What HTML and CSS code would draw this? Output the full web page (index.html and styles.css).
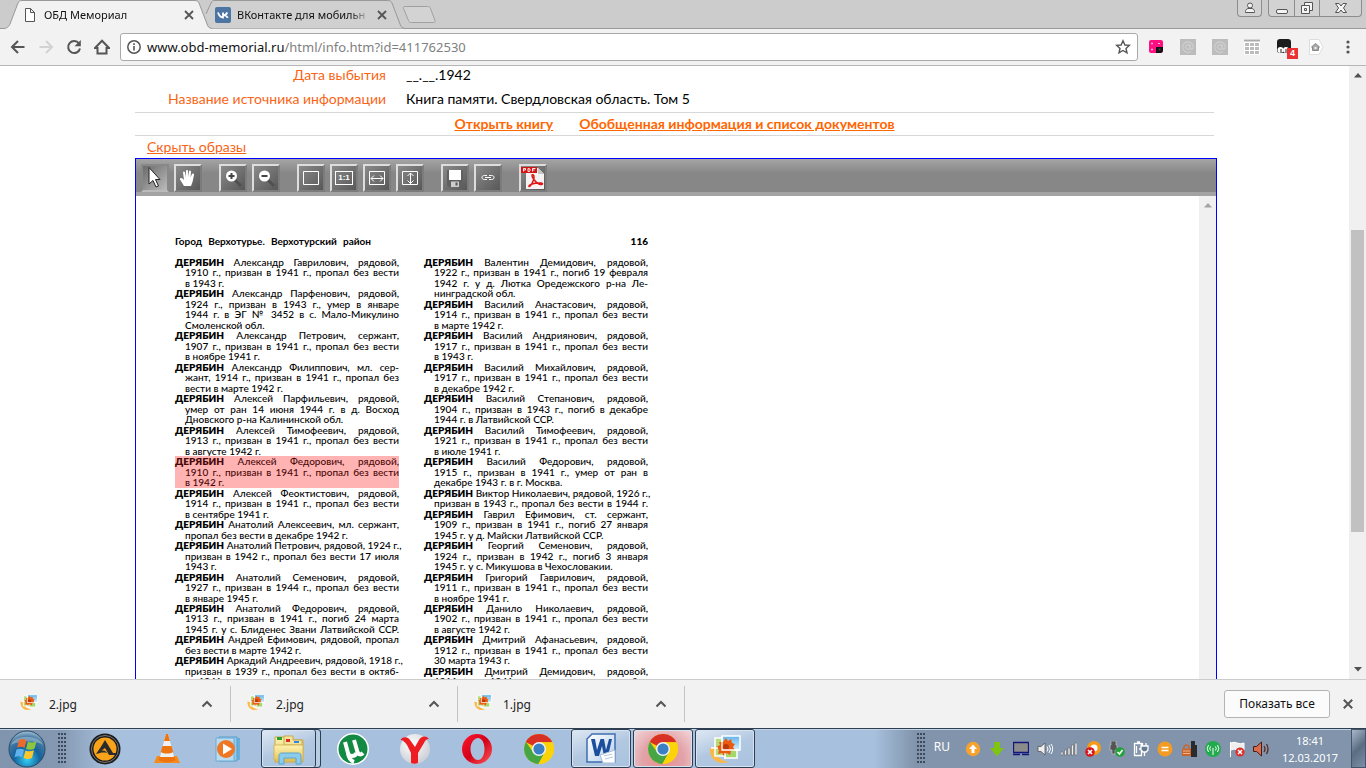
FILE: index.html
```html
<!DOCTYPE html>
<html lang="ru">
<head>
<meta charset="utf-8">
<title>ОБД Мемориал</title>
<link rel="stylesheet" href="styles.css">
</head>
<body>
<svg class="defs" width="0" height="0" aria-hidden="true">
  <defs>
    <linearGradient id="sky" x1="0" y1="0" x2="0" y2="1"><stop offset="0" stop-color="#5fb4ee"/><stop offset="1" stop-color="#d6effc"/></linearGradient>
    <radialGradient id="orb" cx=".5" cy=".8" r=".8"><stop offset="0" stop-color="#35d0f5"/><stop offset=".45" stop-color="#14629c"/><stop offset=".8" stop-color="#4a7ca4"/><stop offset="1" stop-color="#a5c3d8"/></radialGradient>
    <linearGradient id="opera" x1="0" y1="0" x2="1" y2="1"><stop offset="0" stop-color="#ff1b2d"/><stop offset=".5" stop-color="#d4001a"/><stop offset="1" stop-color="#ff5a5a"/></linearGradient>
    <radialGradient id="pearl" cx=".4" cy=".35" r=".7"><stop offset="0" stop-color="#fff"/><stop offset="1" stop-color="#c9ccd2"/></radialGradient>
    <linearGradient id="folder" x1="0" y1="0" x2="0" y2="1"><stop offset="0" stop-color="#fdf3b0"/><stop offset="1" stop-color="#e5c65f"/></linearGradient>
    <linearGradient id="word" x1="0" y1="0" x2="1" y2="1"><stop offset="0" stop-color="#fff"/><stop offset="1" stop-color="#b5cdec"/></linearGradient>
    <symbol id="photo" viewBox="0 0 32 32">
      <path d="M1 15C0 25 8 33 20 29C12 28 7 24 6 15Z" fill="#fbb848"/>
      <path d="M6 5h15v18H6z" fill="#b6dc7a" stroke="#fff" stroke-width="1.500"/>
      <path d="M13 3h18v14H13z" fill="url(#sky)" stroke="#fff" stroke-width="1.500"/>
      <path d="M16 17h12v8H16z" fill="#a5d76a" stroke="#fff" stroke-width="1.500"/>
      <path d="M17 5l2 3l3-2l1 4l3 1l-2 3l2 3l-4 1l-1 4l-3-2l-3 3l-2-3l-4 1l1-4l-3-3l4-2l-1-3l4 0z" fill="#ec5a10"/>
      <circle cx="17" cy="14" r="3" fill="#b93a08"/>
      <path d="M13 3v14h18M16 20v6M2 15h7" fill="none" stroke="#fff" stroke-width="1.300"/>
    </symbol>
    <symbol id="chrome" viewBox="0 0 30 30">
      <circle cx="15" cy="15" r="14" fill="#fcd209"/>
      <path d="M15 15L2.600 8.400A14 14 0 0 1 27.600 8.700H15Z" fill="#d93025"/>
      <path d="M15 15L20.500 18L14.500 29A14 14 0 0 1 2.700 8.300L9.500 18Z" fill="#46a544"/>
      <path d="M15 8.700H27.600A14 14 0 0 1 14.500 29L20.600 18Z" fill="#fcd209"/>
      <circle cx="15" cy="15" r="6.600" fill="#eef3f8"/><circle cx="15" cy="15" r="5.200" fill="#3b7fc4"/>
    </symbol>
  </defs>
</svg>

<header class="tabstrip">
  <div class="tabs" role="tablist">
    <div class="tab active" role="tab" aria-selected="true">
      <svg class="tab-shape" viewBox="0 0 208 29" preserveAspectRatio="none"><path d="M0 28.5C4 28 5 26 6 24L14 3C15 1 16 .5 18 .5H190C193 .5 194 1 195 3L203 24C204 27 205 28 208 28.5V29H0Z" fill="#f2f2f2"/><path d="M0 28.5C4 28 5 26 6 24L14 3C15 1 16 .5 18 .5H190C193 .5 194 1 195 3L203 24C204 27 205 28 208 28.5" fill="none" stroke="#999"/></svg>
      <svg class="favicon" viewBox="0 0 16 16"><path d="M3.500 1.500h5l4 4v9h-9zM8.500 1.500v4h4" fill="#fff" stroke="#555"/></svg>
      <span class="tab-title">ОБД Мемориал</span>
      <button class="tab-close" type="button" aria-label="Закрыть вкладку"><svg viewBox="0 0 10 10"><path d="M1 1L9 9M9 1L1 9" stroke="#555" stroke-width="1.800"/></svg></button>
    </div>
    <div class="tab" role="tab" aria-selected="false">
      <svg class="tab-shape" viewBox="0 0 208 29" preserveAspectRatio="none"><path d="M8 14L14 3C15 1 16 .5 18 .5H190C193 .5 194 1 195 3L203 24C204 27 205 28 208 28.5H15Z" fill="#d0d0d0"/><path d="M9 14L14 3C15 1 16 .5 18 .5H190C193 .5 194 1 195 3L203 24C204 27 205 28 208 28.5" fill="none" stroke="#999"/></svg>
      <svg class="favicon" viewBox="0 0 16 16"><rect width="16" height="16" rx="2" fill="#4d75a3"/><path d="M3 5.500C4 8.500 5.500 10.500 8 10.500V5.500M8 8.500C10 8.500 11.500 7 12.300 5.500M8.700 8.200C10.500 8.300 12 9.500 12.800 10.800" fill="none" stroke="#fff" stroke-width="1.800"/></svg>
      <span class="tab-title">ВКонтакте для мобильн</span>
      <button class="tab-close" type="button" aria-label="Закрыть вкладку"><svg viewBox="0 0 10 10"><path d="M1 1L9 9M9 1L1 9" stroke="#555" stroke-width="1.800"/></svg></button>
    </div>
    <button class="new-tab" type="button" aria-label="Новая вкладка"><svg viewBox="0 0 34 18"><path d="M3 .5H25.500C27 .5 28 1 28.500 2.500L33 14.500C33.500 16 33 16.500 31.500 16.500H9.500C8 16.500 7 16 6.500 14.500L1.500 2.500C1 1.200 1.500.5 3 .5Z" fill="#d3d3d3" stroke="#a0a0a0"/></svg></button>
  </div>
  <div class="window-controls">
    <button class="user" type="button" aria-label="Пользователь"><svg viewBox="0 0 12 12"><circle cx="6" cy="3.500" r="2.500"/><path d="M1.500 10.500V9.500C1.500 7.500 3 7 4 6.500H8C9 7 10.500 7.500 10.500 9.500V10.500Z"/></svg></button>
    <div class="window-group">
      <button type="button" aria-label="Свернуть"><svg viewBox="0 0 14 14"><rect x="1.500" y="8.500" width="11" height="4" rx="1.500"/></svg></button>
      <button type="button" aria-label="Восстановить"><svg viewBox="0 0 14 14"><path d="M4.500 1.500h8v8h-8z"/><path d="M1.500 4.500h8v8h-8z"/><path d="M4.500 7.500h2v2h-2z"/></svg></button>
      <button class="wide" type="button" aria-label="Закрыть"><svg viewBox="0 0 14 14"><path d="M1.500 2.500h3.500L7 5L9 2.500h3.500L9.500 7L12.500 11.500H9L7 9L5 11.500H1.500L4.500 7Z"/></svg></button>
    </div>
  </div>
</header>

<nav class="toolbar">
  <button type="button" aria-label="Назад"><svg viewBox="0 0 16 16"><path d="M14.500 8H2.500M8 2L2 8L8 14" stroke="#555"/></svg></button>
  <button type="button" aria-label="Вперёд"><svg viewBox="0 0 16 16"><path d="M1.500 8H13.500M8 2L14 8L8 14" stroke="#d2d2d2"/></svg></button>
  <button type="button" aria-label="Обновить"><svg viewBox="0 0 16 16"><path d="M13 4.500A6 6 0 1 0 14 9.500" stroke="#555"/><path d="M14.800 1V7.300H8.500Z" fill="#555" stroke="none"/></svg></button>
  <button type="button" aria-label="Домой"><svg viewBox="0 0 16 16"><path d="M1 9L8 1.800L15 9H12.500V14.500H3.500V9Z" stroke="#555"/></svg></button>
  <div class="address">
    <svg class="info-icon" viewBox="0 0 16 16"><circle cx="8" cy="8" r="6.200" fill="none" stroke="#555" stroke-width="1.500"/><path d="M8 7v4.500M8 4.300v1.600" stroke="#555" stroke-width="1.600"/></svg>
    <label class="host" for="url">www.obd-memorial.ru</label>
    <input id="url" type="text" value="/html/info.htm?id=411762530">
    <button type="button" aria-label="В закладки"><svg viewBox="0 0 16 16"><path d="M8 1.800L9.900 6L14.300 6.400L11 9.400L12 13.900L8 11.500L4 13.900L5 9.400L1.700 6.400L6.100 6Z" stroke="#555" stroke-width="1.400"/></svg></button>
  </div>
  <div class="extensions">
    <button type="button" aria-label="Расширение"><svg viewBox="0 0 16 16"><rect x="1" y="1" width="14" height="13" rx="2" fill="#ff0f80"/><path d="M8 8h7v4l-2 2H8z" fill="#111"/><path d="M3 4.500h2M4 3.500v2M10 4.500h2M3 10.500h2M4 9.500v2" stroke="#ffb6da" stroke-width="1"/><rect x="10.500" y="9.500" width="2" height="2" fill="#444"/></svg></button>
    <button type="button" aria-label="Почта"><svg viewBox="0 0 16 16"><rect width="16" height="16" fill="#bcbcbc"/><circle cx="8" cy="8" r="2.300" stroke="#cfcfcf" stroke-width="1.200"/><path d="M10.300 5.500V9C10.300 10.800 13.300 10.500 13.300 8A5.300 5.300 0 1 0 11 12.500" stroke="#cfcfcf" stroke-width="1.200"/></svg></button>
    <button type="button" aria-label="Почта"><svg viewBox="0 0 16 16"><rect width="16" height="16" fill="#bcbcbc"/><circle cx="8" cy="8" r="2.300" stroke="#cfcfcf" stroke-width="1.200"/><path d="M10.300 5.500V9C10.300 10.800 13.300 10.500 13.300 8A5.300 5.300 0 1 0 11 12.500" stroke="#cfcfcf" stroke-width="1.200"/></svg></button>
    <button type="button" aria-label="Таблица"><svg viewBox="0 0 16 16"><rect width="16" height="16" fill="#fff"/><path d="M0 1.500h16" stroke="#aaa" stroke-width="2"/><path d="M1 5.500h14M1 9.500h14M1 13.500h14" stroke="#bcbcbc" stroke-width="3" stroke-dasharray="4 1"/></svg></button>
    <button class="badged" type="button" aria-label="Расширение, 4"><svg viewBox="0 0 16 16"><rect x="1" y="0" width="14" height="14" rx="3" fill="#1c1c1c"/><circle cx="4.500" cy="11" r="3" fill="#fff"/><circle cx="10" cy="11" r="3" fill="#fff"/><path d="M5 10v4M10 10v4" stroke="#222" stroke-width="1"/></svg><span class="badge">4</span></button>
    <button type="button" aria-label="Домашняя страница"><svg viewBox="0 0 16 16"><path d="M1.500.5H11L15 8L11 15.500H1.500Z" fill="#fff" stroke="#ddd" stroke-width="1"/><path d="M3.500 8L7.500 4.500L11.500 8H10.500V11.500H4.500V8Z" fill="#aaa" stroke="#888" stroke-width="1"/><path d="M6.500 8h2v2h-2z" fill="#eee"/></svg></button>
  </div>
  <button class="menu" type="button" aria-label="Меню"><svg viewBox="0 0 16 16"><g fill="#555"><circle cx="8" cy="3" r="1.600"/><circle cx="8" cy="8" r="1.600"/><circle cx="8" cy="13" r="1.600"/></g></svg></button>
</nav>

<div class="viewport">
  <main class="page">
    <dl class="facts">
      <dt>Дата выбытия</dt><dd>__.__.1942</dd>
      <dt>Название источника информации</dt><dd>Книга памяти. Свердловская область. Том 5</dd>
    </dl>
    <div class="links">
      <a href="#book">Открыть книгу</a>
      <a href="#summary">Обобщенная информация и список документов</a>
    </div>
    <div class="toggle"><a href="#viewer">Скрыть образы</a></div>

    <section class="viewer" id="viewer">
      <div class="viewer-bar">
        <div class="group">
          <button class="pressed" type="button" aria-label="Указатель"><svg viewBox="0 0 24 24"><path d="M6 1.500V18L10 14.500L13 21L15.500 20L12.500 13.500H17Z" fill="#fff" stroke="#222"/></svg></button>
          <button type="button" aria-label="Рука"><svg viewBox="0 0 24 24"><path d="M8 20L4 13.500C3.500 12 5.500 11.500 6.500 12.500L8 14L7 6.500C7 5 8.800 5 9 6.500L10 11V5C10 3.500 12 3.500 12 5V11L13 5.500C13.300 4 15 4.500 15 6L14.500 11.500L16 8C16.600 6.800 18.300 7.500 18 9L16.500 16L15 20Z" fill="#fff"/></svg></button>
        </div>
        <div class="group">
          <button type="button" aria-label="Увеличить"><svg viewBox="0 0 24 24"><path d="M14 14L20 20" stroke="#505050" stroke-width="3"/><circle cx="10.500" cy="10" r="5.500" fill="#fff"/><path d="M10.500 7v6M7.500 10h6" stroke="#444" stroke-width="2"/></svg></button>
          <button type="button" aria-label="Уменьшить"><svg viewBox="0 0 24 24"><path d="M14 14L20 20" stroke="#505050" stroke-width="3"/><circle cx="10.500" cy="10" r="5.500" fill="#fff"/><path d="M7.500 10h6" stroke="#444" stroke-width="2"/></svg></button>
        </div>
        <div class="group">
          <button type="button" aria-label="Страница целиком"><svg viewBox="0 0 24 24"><path d="M4.500 5.500h15v13h-15z" fill="none" stroke="#fff"/></svg></button>
          <button type="button" class="ratio"><span>1:1</span></button>
          <button type="button" aria-label="По ширине"><svg viewBox="0 0 24 24"><path d="M4.500 5.500h15v13h-15zM6 12.500h12M9 9.500l-3 3l3 3M15 9.500l3 3l-3 3" fill="none" stroke="#fff"/></svg></button>
          <button type="button" aria-label="По высоте"><svg viewBox="0 0 24 24"><path d="M4.500 5.500h15v13h-15zM12.500 7v11M9.500 10l3-3l3 3M9.500 14.500l3 3l3-3" fill="none" stroke="#fff"/></svg></button>
        </div>
        <div class="group">
          <button type="button" aria-label="Сохранить"><svg viewBox="0 0 24 24"><path d="M4 4h16v17H6L4 19Z" fill="#606060"/><path d="M6 4h12v10H6z" fill="#fff"/><path d="M8 15.500h8V21H8z" fill="#ccc"/><path d="M12.500 16.500h2v3h-2z" fill="#555"/></svg></button>
          <button type="button" aria-label="Ссылка"><svg viewBox="0 0 24 24"><path d="M11 9.500H8.500C6.500 9.500 6 10.500 6 11.500S6.500 13.500 8.500 13.500H11M13 9.500H15.500C17.500 9.500 18 10.500 18 11.500S17.500 13.500 15.500 13.500H13M9 11.500h6" fill="none" stroke="#fff"/></svg></button>
        </div>
        <div class="group">
          <button type="button" aria-label="PDF"><svg viewBox="0 0 24 24"><path d="M5 2h12l6 6v15H5z" fill="#f4f2f2"/><path d="M17 2v6h6z" fill="#c8c5c5"/><path d="M0 1h16v6H0z" fill="#d41414"/><path d="M2.500 5.500v-3h2v1.500h-2M7 2.500v3h1.500l.5-.5v-2zM11.500 5.500v-3h3M11.500 4h2" fill="none" stroke="#fff" stroke-width=".9"/><path d="M11 9C13 8 13.500 11 12.500 14C11.500 17 9 21 8 20.500C7 19 13 16.500 20 17C23 17.500 21 19.500 18 18C14 16 10.500 11 11 9Z" fill="none" stroke="#e01515" stroke-width="1.500"/></svg></button>
        </div>
      </div>
      <div class="canvas">
        <article class="sheet">
          <header class="sheet-head"><span>Город Верхотурье. Верхотурский район</span><b>116</b></header>
          <div class="columns">
            <div class="column">
              <p><span><b>ДЕРЯБИН</b> Александр Гаврилович, рядовой,</span><span>1910 г., призван в 1941 г., пропал без вести</span><span>в 1943 г.</span></p>
              <p><span><b>ДЕРЯБИН</b> Александр Парфенович, рядовой,</span><span>1924 г., призван в 1943 г., умер в январе</span><span>1944 г. в ЭГ № 3452 в с. Мало-Микулино</span><span>Смоленской обл.</span></p>
              <p><span><b>ДЕРЯБИН</b> Александр Петрович, сержант,</span><span>1907 г., призван в 1941 г., пропал без вести</span><span>в ноябре 1941 г.</span></p>
              <p><span><b>ДЕРЯБИН</b> Александр Филиппович, мл. сер-</span><span>жант, 1914 г., призван в 1941 г., пропал без</span><span>вести в марте 1942 г.</span></p>
              <p><span><b>ДЕРЯБИН</b> Алексей Парфильевич, рядовой,</span><span>умер от ран 14 июня 1944 г. в д. Восход</span><span>Дновского р-на Калининской обл.</span></p>
              <p><span><b>ДЕРЯБИН</b> Алексей Тимофеевич, рядовой,</span><span>1913 г., призван в 1941 г., пропал без вести</span><span>в августе 1942 г.</span></p>
              <p class="found"><span><b>ДЕРЯБИН</b> Алексей Федорович, рядовой,</span><span>1910 г., призван в 1941 г., пропал без вести</span><span>в 1942 г.</span></p>
              <p><span><b>ДЕРЯБИН</b> Алексей Феоктистович, рядовой,</span><span>1914 г., призван в 1941 г., пропал без вести</span><span>в сентябре 1941 г.</span></p>
              <p><span><b>ДЕРЯБИН</b> Анатолий Алексеевич, мл. сержант,</span><span>пропал без вести в декабре 1942 г.</span></p>
              <p><span><b>ДЕРЯБИН</b> Анатолий Петрович, рядовой, 1924 г.,</span><span>призван в 1942 г., пропал без вести 17 июля</span><span>1943 г.</span></p>
              <p><span><b>ДЕРЯБИН</b> Анатолий Семенович, рядовой,</span><span>1927 г., призван в 1944 г., пропал без вести</span><span>в январе 1945 г.</span></p>
              <p><span><b>ДЕРЯБИН</b> Анатолий Федорович, рядовой,</span><span>1913 г., призван в 1941 г., погиб 24 марта</span><span class="full">1945 г. у с. Блиденес Звани Латвийской ССР.</span></p>
              <p><span><b>ДЕРЯБИН</b> Андрей Ефимович, рядовой, пропал</span><span>без вести в марте 1942 г.</span></p>
              <p><span><b>ДЕРЯБИН</b> Аркадий Андреевич, рядовой, 1918 г.,</span><span>призван в 1939 г., пропал без вести в октяб-</span><span>ре 1941 г.</span></p>
            </div>
            <div class="column">
              <p><span><b>ДЕРЯБИН</b> Валентин Демидович, рядовой,</span><span>1922 г., призван в 1941 г., погиб 19 февраля</span><span>1942 г. у д. Лютка Оредежского р-на Ле-</span><span>нинградской обл.</span></p>
              <p><span><b>ДЕРЯБИН</b> Василий Анастасович, рядовой,</span><span>1914 г., призван в 1941 г., пропал без вести</span><span>в марте 1942 г.</span></p>
              <p><span><b>ДЕРЯБИН</b> Василий Андриянович, рядовой,</span><span>1917 г., призван в 1941 г., пропал без вести</span><span>в 1943 г.</span></p>
              <p><span><b>ДЕРЯБИН</b> Василий Михайлович, рядовой,</span><span>1917 г., призван в 1941 г., пропал без вести</span><span>в декабре 1942 г.</span></p>
              <p><span><b>ДЕРЯБИН</b> Василий Степанович, рядовой,</span><span>1904 г., призван в 1943 г., погиб в декабре</span><span>1944 г. в Латвийской ССР.</span></p>
              <p><span><b>ДЕРЯБИН</b> Василий Тимофеевич, рядовой,</span><span>1921 г., призван в 1941 г., пропал без вести</span><span>в июле 1941 г.</span></p>
              <p><span><b>ДЕРЯБИН</b> Василий Федорович, рядовой,</span><span>1915 г., призван в 1941 г., умер от ран в</span><span>декабре 1943 г. в г. Москва.</span></p>
              <p><span><b>ДЕРЯБИН</b> Виктор Николаевич, рядовой, 1926 г.,</span><span class="full">призван в 1943 г., пропал без вести в 1944 г.</span></p>
              <p><span><b>ДЕРЯБИН</b> Гаврил Ефимович, ст. сержант,</span><span>1909 г., призван в 1941 г., погиб 27 января</span><span>1945 г. у д. Майски Латвийской ССР.</span></p>
              <p><span><b>ДЕРЯБИН</b> Георгий Семенович, рядовой,</span><span>1924 г., призван в 1942 г., погиб 3 января</span><span>1945 г. у с. Микушова в Чехословакии.</span></p>
              <p><span><b>ДЕРЯБИН</b> Григорий Гаврилович, рядовой,</span><span>1911 г., призван в 1941 г., пропал без вести</span><span>в ноябре 1941 г.</span></p>
              <p><span><b>ДЕРЯБИН</b> Данило Николаевич, рядовой,</span><span>1902 г., призван в 1941 г., пропал без вести</span><span>в августе 1942 г.</span></p>
              <p><span><b>ДЕРЯБИН</b> Дмитрий Афанасьевич, рядовой,</span><span>1912 г., призван в 1941 г., пропал без вести</span><span>30 марта 1943 г.</span></p>
              <p><span><b>ДЕРЯБИН</b> Дмитрий Демидович, рядовой,</span><span class="full">1911 г., в 1941 г., умер от ран в ноябре</span></p>
            </div>
          </div>
        </article>
        <div class="scrollbar muted"><svg viewBox="0 0 8 5"><path d="M4 0L8 4.500H0Z"/></svg></div>
      </div>
    </section>
  </main>
  <div class="scrollbar">
    <svg viewBox="0 0 8 5"><path d="M4 0L8 4.500H0Z"/></svg>
    <div class="track"><div class="thumb"></div></div>
    <svg viewBox="0 0 8 5"><path d="M4 4.500L8 0H0Z"/></svg>
  </div>
</div>

<section class="downloads">
  <div class="download"><svg class="file"><use href="#photo"/></svg><a href="#file-1">2.jpg</a><button type="button" aria-label="Действия"><svg viewBox="0 0 12 8"><path d="M1.500 6.500L6 2L10.500 6.500"/></svg></button></div>
  <div class="download"><svg class="file"><use href="#photo"/></svg><a href="#file-2">2.jpg</a><button type="button" aria-label="Действия"><svg viewBox="0 0 12 8"><path d="M1.500 6.500L6 2L10.500 6.500"/></svg></button></div>
  <div class="download"><svg class="file"><use href="#photo"/></svg><a href="#file-3">1.jpg</a><button type="button" aria-label="Действия"><svg viewBox="0 0 12 8"><path d="M1.500 6.500L6 2L10.500 6.500"/></svg></button></div>
  <button class="show-all" type="button">Показать все</button>
  <button class="close" type="button" aria-label="Закрыть"><svg viewBox="0 0 10 10"><path d="M.8.800L9.200 9.200M9.200.800L.8 9.200"/></svg></button>
</section>

<footer class="taskbar">
  <button class="start" type="button" aria-label="Пуск"><svg viewBox="0 0 38 38"><circle cx="19" cy="19" r="18" fill="url(#orb)" stroke="#2b4b66"/><path d="M3 15C7 4 31 4 35 15C28 10 12 10 3 15Z" fill="#fff" opacity=".3"/><path d="M11 10C14 8.500 16 9 18.500 10.500L16.500 18C14 16.500 12 16.500 9 17.700Z" fill="#ee6a2c"/><path d="M20 11.500C23 13 25.500 12.800 28.500 11.300L26.500 18.800C23.500 20 21 20 18 18.800Z" fill="#8cc63e"/><path d="M8.500 19.500C11.500 18.200 13.500 18.500 16 19.800L14 27.300C11.500 26 9.500 26 6.500 27.200Z" fill="#5fb2ee"/><path d="M17.500 20.500C20.500 21.800 23 21.500 26 20.300L24 28C21 29.200 18.500 29.200 15.500 28Z" fill="#fbc72f"/></svg></button>
  <span class="grip"></span>
  <div class="apps">
    <button type="button" aria-label="AIMP"><svg viewBox="0 0 32 32"><circle cx="16" cy="16" r="15.500" fill="#1d1d1d"/><circle cx="16" cy="16" r="13.500" fill="none" stroke="#777"/><circle cx="16" cy="16" r="11.500" fill="#f9a31a"/><path d="M16 7L24 20H27V22H20L16 15L12 18C15 17 17 18 18 20C14 19 11 20 7 21C10 17 13 12 16 7Z" fill="#2b2b2b"/></svg></button>
    <button type="button" aria-label="VLC"><svg viewBox="0 0 32 32"><path d="M6 23h20l3 7H3z" fill="#f58a1d"/><path d="M14.500 2h3l6 24C20 29 12 29 8.500 26Z" fill="#f0f0f0"/><path d="M15 1h2l2 7H13ZM11.500 13h9l1.700 6C19 21 13 21 9.800 19ZM8.500 24h15l1 3C20 30 12 30 7.500 27Z" fill="#ee7410"/></svg></button>
    <button type="button" aria-label="Проигрыватель"><svg viewBox="0 0 32 32"><path d="M9 5h18v22H9z" fill="#69aedb"/><path d="M6 4h18v24H6z" fill="#8fcbee" stroke="#5a9cc8"/><path d="M3 5h18v23H3z" fill="#b9dcf2" stroke="#6fabd2"/><circle cx="13" cy="16" r="9" fill="#ef7622"/><path d="M10 10.500L19 16L10 21.500Z" fill="#fff"/></svg></button>
    <button class="open stacked" type="button" aria-label="Проводник"><svg viewBox="0 0 32 32"><path d="M2 4h10l1 3h17v22H2z" fill="url(#folder)" stroke="#c9a84a"/><path d="M11 3h9v4h9v5H11z" fill="#f4e39a" stroke="#c9a84a"/><path d="M4 4h5v3H4z" fill="#2aa32a"/><path d="M13 6h4v3h-4z" fill="#e02c22"/><path d="M21 8h5v2h-5z" fill="#2b87e0"/><path d="M1 12h29v15H1z" fill="url(#folder)" stroke="#d5b75a"/><path d="M6 31V23C6 21 7 20 9 20H25C27 20 28 21 28 23V31H23V25H11V31Z" fill="#8ccbea" stroke="#5ba5ce"/></svg></button>
    <button type="button" aria-label="µTorrent"><svg viewBox="0 0 32 32"><circle cx="16" cy="16" r="16" fill="#fff"/><circle cx="16" cy="16" r="14.500" fill="#138a43"/><path d="M8 9L11 20C12 24 18 24 19.500 20M17 7L20.500 19C21.500 22 24 22 26 20M11 20C11 24 14 28 17 29" fill="none" stroke="#fff" stroke-width="4"/></svg></button>
    <button type="button" aria-label="Яндекс"><svg viewBox="0 0 32 32"><circle cx="16" cy="16" r="15" fill="url(#pearl)"/><path d="M1.500 7C4 3 9 4 11 7L16 14L20 7C22 3 27 2 30 6C27 6 26 8 25 10L19 20V30C17 31 14 31 12 30V20L8 12C6 9 4 7 1.500 7Z" fill="#ee1c23"/></svg></button>
    <button type="button" aria-label="Opera"><svg viewBox="0 0 32 32"><path fill-rule="evenodd" d="M16 1A15 15 0 1 0 16 31A15 15 0 1 0 16 1ZM17 5C21 5 23.500 10 23.500 16S21 27 17 27S9.500 22 9.500 16S13 5 17 5Z" fill="url(#opera)"/></svg></button>
    <button type="button" aria-label="Chrome"><svg><use href="#chrome"/></svg></button>
    <button class="open" type="button" aria-label="Word"><svg viewBox="0 0 32 32"><path d="M7 1H30V29H2V6Z" fill="url(#word)" stroke="#3d6fb0" stroke-width="1.500"/><path d="M6 6h4l2 11L15.500 6H19L21 17L24 6h3L23 23H19L17 13L14 23H10Z" fill="#1b4f9e"/><path d="M15 22L30 17V30H18Z" fill="#fff" stroke="#a8bdd8"/><path d="M19 23l8-2M20 26l8-2" stroke="#b6c8de"/></svg></button>
    <button class="open alert" type="button" aria-label="Chrome"><svg><use href="#chrome"/></svg></button>
    <button class="open" type="button" aria-label="Просмотр фотографий"><svg><use href="#photo"/></svg></button>
  </div>
  <span class="grip"></span>
  <span class="lang">RU</span>
  <div class="tray">
    <svg viewBox="0 0 16 16"><circle cx="8" cy="8" r="7.200" fill="#f7a22d"/><path d="M8 3.500L12 8H9.500V12H6.500V8H4Z" fill="#fff"/></svg>
    <svg viewBox="0 0 16 16"><path d="M5 1h6v6h4L8 15.500L1 7H5Z" fill="#7fc412"/></svg>
    <svg viewBox="0 0 16 16"><path d="M.5 1.500h15v10H.5zM0 13.500h7M9 13.500h7" fill="#8b8b8b" stroke="#15157c" stroke-width="1.300"/></svg>
    <svg viewBox="0 0 16 16"><path d="M1 5.500h3L8 2v12L4 10.500H1z" fill="#eee" stroke="#555" stroke-width=".8"/><path d="M10 5.500q2 2.500 0 5M12 4q3 4 0 8M14 3q3.500 5 0 10" fill="none" stroke="#fff"/></svg>
    <svg viewBox="0 0 16 16"><path d="M0 11h2v3H0zM3.500 9h2v5h-2zM7 7h2v7H7zM10.500 4h2v10h-2zM14 2h2v12h-2z" fill="#eee" stroke="#555" stroke-width=".5"/></svg>
    <svg viewBox="0 0 16 16"><circle cx="9" cy="7" r="7" fill="#f69a17"/><circle cx="9" cy="7" r="3.500" fill="#fff"/><circle cx="5" cy="11" r="4.800" fill="#d9161c"/><path d="M3 9l4 4M7 9l-4 4" stroke="#fff" stroke-width="1.600"/></svg>
    <svg viewBox="0 0 16 16"><path d="M2 0h5v4h1v5H6v4H3V9H1V4h1z" fill="#555" stroke="#ccc" stroke-width=".6"/><circle cx="11" cy="11" r="4.800" fill="#25a13b"/><path d="M8.500 11l2 2l3-4" fill="none" stroke="#fff" stroke-width="1.500"/></svg>
    <svg viewBox="0 0 16 16"><path d="M1.500 2.500h7v12h-7zM4 1h3M3.500 5v7M6 8h3" fill="none" stroke="#fff" stroke-width="1.300"/><path d="M8 5h7v4l-2 2h-3L8 9zM9.500 2v3M13 2v3M11.500 11v4" fill="#667a92" stroke="#fff" stroke-width="1.300"/></svg>
    <svg viewBox="0 0 16 16"><circle cx="8" cy="8" r="7.500" fill="#f59b22"/><path d="M4.500 6.500h7M4.500 9.500h7" stroke="#fff" stroke-width="1.600"/></svg>
    <svg viewBox="0 0 16 16"><path d="M10 0h4v4h2v12h-6z" fill="#2b2b2b"/><path d="M1 7.500h9v7.500H1z" fill="#c9652b"/><path d="M3 7.500V5.500Q5.500 2.500 8 5.500V7.500" fill="none" stroke="#c9652b" stroke-width="1.500"/><path d="M2 10h7M2 12.500h7" stroke="#efb48e"/></svg>
    <svg viewBox="0 0 16 16"><circle cx="8" cy="8" r="8" fill="#21ab4d"/><path d="M8 7v7M5.500 5.500q-1.500 2 0 4M10.500 5.500q1.500 2 0 4M3.500 4q-2.500 3.500 0 7M12.500 4q2.500 3.500 0 7" fill="none" stroke="#fff"/></svg>
    <svg viewBox="0 0 16 16"><path d="M1.500 1v15M2 2q3-1.500 6 0t7 0v7q-4 2-7 0t-6 0" fill="#eee" stroke="#fff"/><circle cx="11" cy="11" r="4.600" fill="#d9322c"/><path d="M9 9l4 4M13 9l-4 4" stroke="#fff" stroke-width="1.500"/></svg>
    <svg viewBox="0 0 16 16"><path d="M.5 5.500h3L8.500 1v14L3.500 10.500h-3z" fill="#d96b4f" stroke="#4b1c12"/><path d="M11 5q2 3 0 6M13.500 3q3 5 0 10" fill="none" stroke="#5b2a22" stroke-width="1.300"/></svg>
  </div>
  <time class="clock" datetime="2017-03-12T18:41"><span>18:41</span><span>12.03.2017</span></time>
  <button class="desktop" type="button" aria-label="Свернуть все окна"></button>
</footer>
</body>
</html>
```

FILE: styles.css
```css
* { box-sizing: border-box; }

body {
  margin: 0;
  height: 100vh;
  display: flex;
  flex-direction: column;
  overflow: hidden;
  background: #fff;
  color: #111;
  font: 12px/18px "Noto Sans", "Open Sans", sans-serif;
}

button {
  display: flex;
  align-items: center;
  justify-content: center;
  padding: 0;
  border: 0;
  background: none;
  font: inherit;
  color: inherit;
}

svg { display: block; flex: none; }
.defs { position: absolute; }

/* Tabs */
.tabstrip {
  flex: none;
  display: flex;
  justify-content: space-between;
  align-items: flex-start;
  height: 29px;
  background: #ccc;
  border-bottom: 1px solid #999;
}
.tabs { display: flex; padding-left: 4px; }
.tab {
  position: relative;
  display: flex;
  align-items: center;
  width: 208px;
  height: 29px;
  margin-right: -15px;
  padding: 0 15px 0 18px;
}
.tab.active { z-index: 1; }
.tab-shape { position: absolute; inset: 0; width: 100%; height: 100%; }
.favicon, .tab-title, .tab-close { position: relative; }
.favicon { width: 16px; height: 16px; margin-right: 6px; }
.tab-title {
  flex: 1;
  overflow: hidden;
  white-space: nowrap;
  font-size: 11px;
  mask-image: linear-gradient(90deg, #000 85%, transparent);
}
.tab-close { width: 16px; height: 16px; margin-left: 4px; }
.tab-close svg { width: 10px; height: 10px; }
.new-tab { align-self: center; margin-left: 12px; }
.new-tab svg { width: 34px; height: 18px; }

.window-controls { display: flex; gap: 6px; padding-right: 4px; }
.window-controls svg { width: 14px; height: 14px; fill: #f4f4f4; stroke: #555; }
.window-controls button { width: 25px; height: 16px; }
.window-controls .wide { width: 42px; }
.window-controls .user,
.window-group { border: 1px solid #8d8d8d; border-top: 0; border-radius: 0 0 4px 4px; background: #d2d2d2; }
.window-controls .user { height: 17px; }
.window-controls .user svg { width: 12px; height: 12px; }
.window-group { display: flex; }
.window-group button + button { border-left: 1px solid #8d8d8d; }

/* Toolbar */
.toolbar {
  flex: none;
  display: flex;
  align-items: center;
  height: 37px;
  padding: 0 4px;
  background: #f2f2f2;
  border-bottom: 1px solid #b6b6b6;
}
.toolbar > button { width: 28px; height: 28px; }
.toolbar svg { width: 16px; height: 16px; fill: none; stroke-width: 2; }
.address {
  flex: 1;
  display: flex;
  align-items: center;
  height: 28px;
  margin-left: 4px;
  padding: 0 6px 0 5px;
  border: 1px solid #a9a9a9;
  border-radius: 3px;
  background: #fff;
  font-size: 13px;
}
.info-icon { margin-right: 5px; }
.address input {
  flex: 1;
  min-width: 0;
  padding: 0;
  border: 0;
  outline: 0;
  background: none;
  font: inherit;
  color: #808080;
}
.extensions { display: flex; gap: 16px; padding: 0 10px; }
.badged { position: relative; }
.badge {
  position: absolute;
  left: 11px;
  top: 9px;
  width: 11px;
  height: 11px;
  background: #ea3232;
  color: #fff;
  font: bold 9px/11px "Liberation Sans", sans-serif;
}

/* Page */
.viewport { flex: 1; min-height: 0; display: flex; }
.page {
  flex: 1;
  min-width: 0;
  padding: 0 135px;
  display: flex;
  flex-direction: column;
  overflow: hidden;
  font: 14px/18px Lato, "Open Sans", sans-serif;
}
.facts {
  display: grid;
  grid-template-columns: 251px 1fr;
  gap: 6px 20px;
  margin: 0;
  padding-bottom: 4px;
  border-bottom: 1px solid #d8d8d8;
}
.facts dt { color: #fa6414; text-align: right; white-space: nowrap; }
.facts dd { margin: 0; color: #000; }
.links {
  display: flex;
  justify-content: center;
  gap: 26px;
  padding: 2px 0;
  border-bottom: 1px solid #d8d8d8;
  font-weight: bold;
}
.page a { color: #f60; }
.toggle { padding: 2px 12px; }
.toggle a { color: #fa6414; }

.viewer {
  flex: 1;
  min-height: 0;
  display: flex;
  flex-direction: column;
  margin-right: -3px;
  border: 1px solid #00f;
  border-bottom: 0;
}
.viewer-bar {
  flex: none;
  display: flex;
  gap: 17px;
  padding: 5px 5px 0;
  height: 37px;
  border-bottom: 4px solid #a3a3a3;
  background: linear-gradient(#a5a5a5, #878787 14px);
}
.group { display: flex; gap: 5px; }
.group button {
  width: 28px;
  height: 28px;
  border: 2px solid;
  border-color: #ddd #7c7c7c #7c7c7c #ddd;
  background: linear-gradient(135deg, #8a8a8a, #585858);
}
.group button.pressed { border-color: #888 #888 #bbb #888; background: linear-gradient(135deg, #6a6a6a, #bbb); }
.group svg { width: 24px; height: 24px; }
.ratio span {
  padding: 0 2px;
  border: 1px solid #fff;
  color: #fff;
  font: bold 8px/12px "Liberation Sans", sans-serif;
}
.canvas { flex: 1; min-height: 0; display: flex; justify-content: space-between; overflow: hidden; background: #fff; }
.sheet { padding: 40px 0 0 39px; color: #000; font: 500 10px/10px Lato, sans-serif; white-space: nowrap; }
.sheet-head {
  display: flex;
  justify-content: space-between;
  margin-bottom: 11px;
  font-weight: bold;
}
.sheet-head span { width: 196px; text-align-last: justify; }
.columns { display: grid; grid-template-columns: 224px 224px; gap: 25px; }
.column { height: 430px; display: flex; flex-direction: column; }
.column p { display: contents; }
.column span { flex: 1; padding-left: 10px; text-align-last: justify; }
.column span:first-child { padding-left: 0; }
.column span:last-child { text-align-last: left; }
.column span.full { text-align-last: justify; }
.column b { font-weight: 800; }
.column .found span { background: #ffb3b3; color: #4a0808; }

.scrollbar {
  flex: none;
  display: flex;
  flex-direction: column;
  align-items: center;
  width: 17px;
  padding: 7px 0;
  background: #f0f0f0;
}
.scrollbar svg { width: 8px; height: 5px; fill: #505050; }
.scrollbar.muted svg { fill: #a3a3a3; }
.track { flex: 1; width: 13px; padding: 152px 0 0; }
.thumb { height: 69%; background: #c1c1c1; }

/* Downloads */
.downloads {
  flex: none;
  display: flex;
  align-items: center;
  height: 49px;
  background: #f2f2f2;
  border-top: 1px solid #ccc;
}
.download {
  display: flex;
  align-items: center;
  width: 227px;
  height: 36px;
  padding: 0 17px 0 16px;
  border-right: 1px solid #c4c4c4;
}
.download:first-child { width: 231px; padding-left: 20px; }
.file { width: 18px; height: 18px; margin: 0 11px 4px 0; }
.download a { flex: 1; padding-top: 2px; color: #222; text-decoration: none; }
.download button svg { width: 12px; height: 8px; fill: none; stroke: #555; stroke-width: 2; }
.show-all {
  width: 106px;
  height: 28px;
  margin-left: auto;
  border: 1px solid #b3b3b3;
  border-radius: 3px;
  background: #fbfbfb;
}
.close { margin: 0 13px; }
.close svg { width: 10px; height: 10px; stroke: #555; stroke-width: 2; }

/* Taskbar */
.taskbar {
  flex: none;
  display: flex;
  align-items: center;
  height: 40px;
  border-top: 1px solid #2f3f52;
  background: linear-gradient(90deg, #8094ad 0, #8498b1 60px, #a7c0dd 110px, #a7c0dd 64%, #8194ab 67%);
  box-shadow: inset 0 1px #c3d4e6;
}
.start { margin: 0 12px 0 8px; }
.start svg { width: 38px; height: 38px; }
.grip {
  flex: none;
  width: 8px;
  height: 31px;
  background: radial-gradient(circle at 1px 1px, #3d4a5c 1px, transparent 1px) 0 0 / 3px 4px;
}
.apps { flex: 1; display: flex; gap: 2px; padding-left: 9px; }
.apps button { width: 60px; height: 39px; }
.apps svg { width: 32px; height: 32px; }
.apps .open {
  border: 1px solid #2d3d52;
  border-radius: 3px;
  background: linear-gradient(160deg, #dfe8f3, #b2c8e1 50%, #a9c2df);
  box-shadow: inset 0 0 0 1px #d7e3f0;
}
.apps .stacked { padding-right: 5px; box-shadow: inset -4px 0 #b8cce2, inset -5px 0 #2d3d52, inset 0 0 0 1px #d7e3f0; }
.apps .alert { background: radial-gradient(circle at 50% 80%, #e98f92, #e2a3a8 50%, #f3d8dc); }
.lang { margin: 0 15px 4px 9px; color: #fff; }
.tray { display: flex; gap: 8px; }
.tray svg { width: 16px; height: 16px; }
.clock {
  display: flex;
  flex-direction: column;
  align-items: center;
  width: 82px;
  color: #fff;
  font-size: 11px;
  line-height: 17px;
}
.desktop {
  width: 15px;
  height: 39px;
  border: 1px solid #45566b;
  background: linear-gradient(135deg, #a9b8c9, #5b6d83 50%, #7c8fa6);
}
```
